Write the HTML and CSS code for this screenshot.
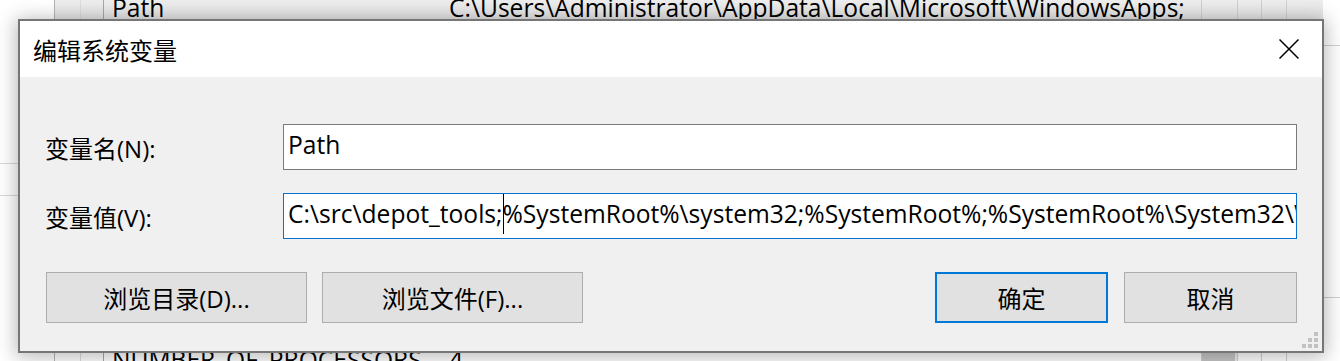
FILE: index.html
```html
<!DOCTYPE html>
<html lang="zh-CN">
<head>
    <meta charset="UTF-8">
    <title>编辑系统变量</title>
    <link rel="stylesheet" href="styles.css">
</head>
<body>
    <div class="desktop">
        <!-- janela de fundo: lista de variaveis do sistema -->
        <div class="env-window">
            <div class="side-left">
                <div class="side-gap-a"></div>
                <div class="side-gap-b"></div>
            </div>
            <div class="env-list">
                <div class="lv-row selected">
                    <span class="c-mark"></span><span class="c-mark2"></span>
                    <span class="c-name">Path</span>
                    <span class="c-value">C:\Users\Administrator\AppData\Local\Microsoft\WindowsApps;</span>
                    <span class="c-s1"></span><span class="c-s2"></span><span class="c-s3"></span><span class="c-s4"></span>
                </div>
                <div class="lv-row"></div>
                <div class="lv-row"></div>
                <div class="lv-row"></div>
                <div class="lv-row"></div>
                <div class="lv-row"></div>
                <div class="lv-row"></div>
                <div class="lv-row"></div>
                <div class="lv-row"></div>
                <div class="lv-row"></div>
                <div class="lv-row"></div>
                <div class="lv-row">
                    <span class="c-mark"></span><span class="c-mark2"></span>
                    <span class="c-name">NUMBER_OF_PROCESSORS</span>
                    <span class="c-value">4</span>
                    <span class="c-s1 thumb"></span><span class="c-s2"></span><span class="c-s3"></span><span class="c-s4"></span>
                </div>
            </div>
            <div class="side-right">
                <div class="side-gap-c"></div>
                <div class="side-gap-d"></div>
            </div>
        </div>

        <!-- dialogo -->
        <div class="dialog">
            <div class="title-bar">
                <span class="title">编辑系统变量</span>
                <button class="close-btn" aria-label="关闭">
                    <svg viewBox="0 0 20 20" width="20" height="20">
                        <path d="M0.5 0.5L19.5 19.5M19.5 0.5L0.5 19.5" stroke="#000" stroke-width="1.5" fill="none"/>
                    </svg>
                </button>
            </div>
            <div class="dialog-body">
                <div class="field-row">
                    <label class="field-label">变量名(N):</label>
                    <div class="field">Path</div>
                </div>
                <div class="field-row last">
                    <label class="field-label">变量值(V):</label>
                    <div class="field focused">C:\src\depot_tools;<span class="caret"></span>%SystemRoot%\system32;%SystemRoot%;%SystemRoot%\System32\Wbem;%SYSTEMROOT%\System32\WindowsPowerShell\v1.0\</div>
                </div>
                <div class="button-row">
                    <button class="btn wide first">浏览目录(D)...</button>
                    <button class="btn wide">浏览文件(F)...</button>
                    <div class="spacer"></div>
                    <button class="btn default">确定</button>
                    <button class="btn cancel">取消</button>
                </div>
            </div>
            <div class="size-grip">
                <span class="off"></span><span class="off"></span><span></span>
                <span class="off"></span><span></span><span></span>
                <span></span><span></span><span></span>
            </div>
        </div>
    </div>
</body>
</html>
```

FILE: styles.css
```css
* {
    margin: 0;
    padding: 0;
    box-sizing: border-box;
}

body {
    font-family: "Open Sans", "Noto Sans CJK SC", sans-serif;
    font-size: 24px;
    color: #000;
    background: #fff;
    width: 1340px;
    height: 361px;
    overflow: hidden;
}

.desktop {
    position: relative;
    width: 1340px;
    height: 361px;
    overflow: hidden;
}

/* janela de fundo */
.env-window {
    display: flex;
    height: 361px;
}

.side-left {
    width: 54px;
    background: #fff;
}

.side-gap-a {
    height: 164px;
    border-bottom: 1px solid #d9d9d9;
}

.side-gap-b {
    height: 32px;
    border-bottom: 1px solid #d9d9d9;
}

.env-list {
    width: 1269px;
    margin-top: -8px;
    border-left: 1px solid #b4b4b4;
}

.lv-row {
    display: flex;
    height: 32px;
    line-height: 32px;
    font-size: 24.6px;
    white-space: nowrap;
}

.lv-row.selected {
    background: linear-gradient(#f2f2f2, #e2e2e2);
}

.c-mark {
    width: 26px;
    border-right: 1px solid #dcdcdc;
}

.c-mark2 {
    width: 23px;
    border-right: 1px solid #a8a8a8;
}

.c-name {
    width: 345px;
    padding-left: 8px;
}

.c-value {
    width: 752px;
    overflow: hidden;
}

.c-s1 {
    width: 36px;
    border-left: 1px solid #d0d0d0;
}

.c-s1.thumb {
    background: #c6c6c6;
    border-right: 2px solid #f0f0f0;
}

.c-s2 {
    width: 24px;
    border-left: 1px solid #d0d0d0;
}

.c-s3 {
    width: 25px;
    border-left: 1px solid #d0d0d0;
}

.c-s4 {
    flex: 1;
    border-left: 1px solid #d0d0d0;
}

.side-right {
    flex: 1;
    background: #fff;
}

.side-gap-c {
    height: 46px;
    border-bottom: 1px solid #d0d0d0;
}

.side-gap-d {
    height: 252px;
    border-bottom: 1px solid #d0d0d0;
}

/* dialogo */
.dialog {
    position: absolute;
    left: 18px;
    top: 19px;
    width: 1306px;
    height: 334px;
    border: 2px solid #767676;
    display: flex;
    flex-direction: column;
    box-shadow: 0 2px 18px 2px rgba(0, 0, 0, 0.28);
}

.title-bar {
    height: 56px;
    background: #fff;
    display: flex;
    align-items: center;
    padding-left: 13px;
}

.title {
    flex: 1;
    font-size: 24px;
}

.close-btn {
    width: 66px;
    height: 56px;
    border: none;
    background: transparent;
    display: flex;
    align-items: center;
    justify-content: center;
}

.dialog-body {
    flex: 1;
    background: #f0f0f0;
    padding: 47px 25px 0 25px;
}

.field-row {
    display: flex;
    align-items: center;
    height: 46px;
    margin-bottom: 23px;
}

.field-row.last {
    margin-bottom: 33px;
}

.field-label {
    width: 238px;
    font-size: 24px;
}

.field {
    flex: 1;
    height: 46px;
    line-height: 40px;
    font-size: 24.6px;
    border: 1px solid #7a7a7a;
    background: #fff;
    padding: 0 4px;
    white-space: nowrap;
    overflow: hidden;
}

.field.focused {
    border-color: #0a6fd0;
}

.caret {
    display: inline-block;
    width: 1px;
    height: 40px;
    background: #000;
    vertical-align: top;
    margin-right: -1px;
}

.button-row {
    display: flex;
    height: 51px;
}

.btn {
    height: 51px;
    font-family: inherit;
    font-size: 24px;
    color: #000;
    background: #e1e1e1;
    border: 1px solid #adadad;
}

.btn.wide {
    width: 261px;
    margin-left: 15px;
}

.btn.first {
    margin-left: 1px;
}

.spacer {
    flex: 1;
}

.btn.default {
    width: 173px;
    border: 2px solid #0078d7;
}

.btn.cancel {
    width: 173px;
    margin-left: 16px;
}

.size-grip {
    position: absolute;
    right: 4px;
    bottom: 3px;
    display: grid;
    grid-template-columns: repeat(3, 4px);
    grid-template-rows: repeat(3, 4px);
    gap: 2px;
}

.size-grip span {
    background: #c2c2c2;
}

.size-grip span.off {
    background: transparent;
}
```
